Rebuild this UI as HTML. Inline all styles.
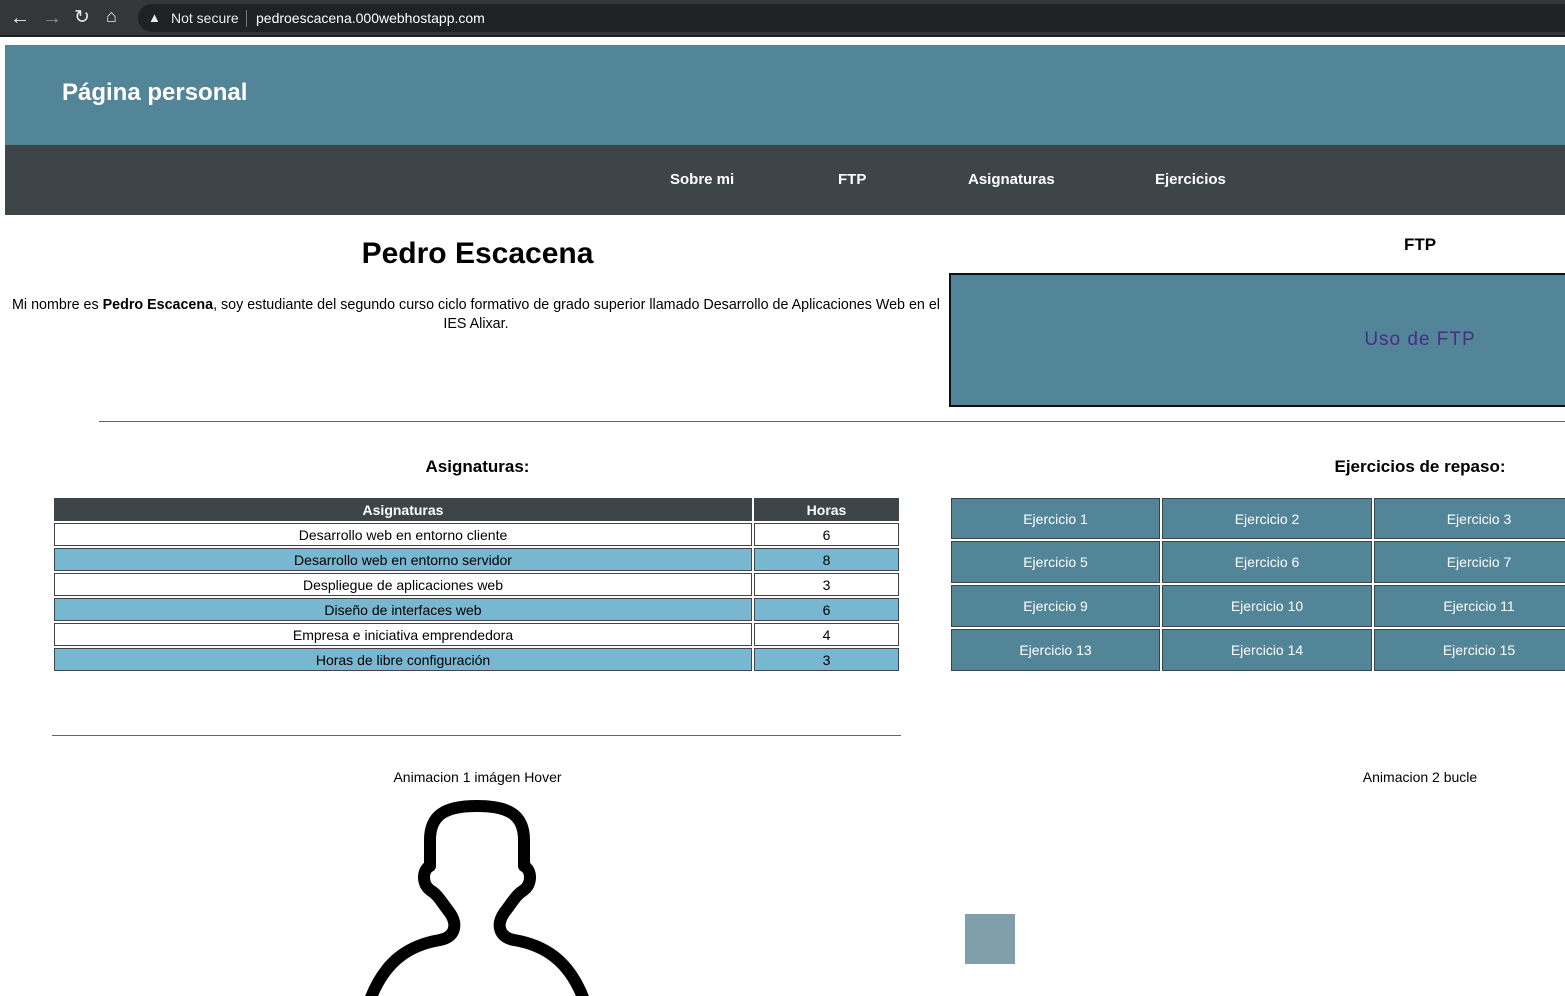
<!DOCTYPE html>
<html><head><meta charset="utf-8"><style>
*{margin:0;padding:0;box-sizing:border-box}
body{width:1565px;height:996px;overflow:hidden;background:#fff;font-family:"Liberation Sans",sans-serif;position:relative;color:#000}
.a{position:absolute}
.c{text-align:center}
.btn{position:absolute;background:#538598;border:1px solid #3a4448;color:#fff;font-size:14px;display:flex;align-items:center;justify-content:center}
.cell{position:absolute;border:1px solid #444;font-size:14px;display:flex;align-items:center;justify-content:center;height:23px}
.b{background:#78b7d0}
</style></head><body>
<div class="a" style="left:0;top:0;width:1565px;height:37px;background:#35363a"></div>
<div class="a" style="left:0;top:35px;width:1565px;height:2px;background:#202124"></div>
<div class="a" style="left:138px;top:4px;width:1427px;height:28px;border-radius:14px 0 0 14px;background:#202124"></div>
<div class="a" style="left:10px;top:7px;color:#e8eaed;font-size:20px">&#8592;</div>
<div class="a" style="left:42px;top:7px;color:#888;font-size:20px">&#8594;</div>
<div class="a" style="left:74px;top:6px;color:#e8eaed;font-size:19px">&#8635;</div>
<div class="a" style="left:106px;top:6px;color:#e8eaed;font-size:18px">&#8962;</div>
<div class="a" style="left:148px;top:10px;color:#e8eaed;font-size:13px">&#9650;</div>
<div class="a" style="left:171px;top:10px;color:#e8eaed;font-size:14px">Not secure</div>
<div class="a" style="left:246px;top:10px;width:1px;height:17px;background:#777"></div>
<div class="a" style="left:256px;top:10px;color:#fff;font-size:14px">pedroescacena.000webhostapp.com</div>

<div class="a" style="left:5px;top:45px;width:1560px;height:100px;background:#538598"></div>
<div class="a" style="left:62px;top:79px;color:#fff;font-size:24px;font-weight:bold">Página personal</div>
<div class="a" style="left:5px;top:145px;width:1560px;height:70px;background:#3d4549"></div>
<div class="a" style="left:670px;top:171px;color:#fff;font-size:15px;font-weight:bold">Sobre mi</div>
<div class="a" style="left:838px;top:171px;color:#fff;font-size:15px;font-weight:bold">FTP</div>
<div class="a" style="left:968px;top:171px;color:#fff;font-size:15px;font-weight:bold">Asignaturas</div>
<div class="a" style="left:1155px;top:171px;color:#fff;font-size:15px;font-weight:bold">Ejercicios</div>

<div class="a c" style="left:0;top:237px;width:955px;font-size:30px;font-weight:bold">Pedro Escacena</div>
<div class="a c" style="left:2px;top:296px;width:948px;font-size:14.3px;line-height:19px">Mi nombre es <b>Pedro Escacena</b>, soy estudiante del segundo curso ciclo formativo de grado superior llamado Desarrollo de Aplicaciones Web en el IES Alixar.</div>
<div class="a c" style="left:1275px;top:235px;width:290px;font-size:17px;font-weight:bold">FTP</div>
<div class="a" style="left:949px;top:273px;width:620px;height:134px;background:#538598;border:2px solid #111"></div>
<div class="a c" style="left:1275px;top:329px;width:290px;font-size:19px;color:#4b2b8a;letter-spacing:1px">Uso de FTP</div>
<div class="a" style="left:99px;top:421px;width:1466px;height:1px;background:#666"></div>

<div class="a c" style="left:0;top:457px;width:955px;font-size:17px;font-weight:bold">Asignaturas:</div>
<div class="a c" style="left:1275px;top:457px;width:290px;font-size:17px;font-weight:bold">Ejercicios de repaso:</div>

<div class="cell" style="left:54px;top:498px;width:698px;background:#3d4549;color:#fff;font-weight:bold;border-color:#3d4549">Asignaturas</div>
<div class="cell" style="left:754px;top:498px;width:145px;background:#3d4549;color:#fff;font-weight:bold;border-color:#3d4549">Horas</div>
<div class="cell" style="left:54px;top:523px;width:698px">Desarrollo web en entorno cliente</div><div class="cell" style="left:754px;top:523px;width:145px">6</div>
<div class="cell b" style="left:54px;top:548px;width:698px">Desarrollo web en entorno servidor</div><div class="cell b" style="left:754px;top:548px;width:145px">8</div>
<div class="cell" style="left:54px;top:573px;width:698px">Despliegue de aplicaciones web</div><div class="cell" style="left:754px;top:573px;width:145px">3</div>
<div class="cell b" style="left:54px;top:598px;width:698px">Diseño de interfaces web</div><div class="cell b" style="left:754px;top:598px;width:145px">6</div>
<div class="cell" style="left:54px;top:623px;width:698px">Empresa e iniciativa emprendedora</div><div class="cell" style="left:754px;top:623px;width:145px">4</div>
<div class="cell b" style="left:54px;top:648px;width:698px">Horas de libre configuración</div><div class="cell b" style="left:754px;top:648px;width:145px">3</div>

<div class="btn" style="left:951px;top:498px;width:209px;height:41px">Ejercicio 1</div>
<div class="btn" style="left:1162px;top:498px;width:210px;height:41px">Ejercicio 2</div>
<div class="btn" style="left:1374px;top:498px;width:210px;height:41px">Ejercicio 3</div>
<div class="btn" style="left:951px;top:541px;width:209px;height:42px">Ejercicio 5</div>
<div class="btn" style="left:1162px;top:541px;width:210px;height:42px">Ejercicio 6</div>
<div class="btn" style="left:1374px;top:541px;width:210px;height:42px">Ejercicio 7</div>
<div class="btn" style="left:951px;top:585px;width:209px;height:42px">Ejercicio 9</div>
<div class="btn" style="left:1162px;top:585px;width:210px;height:42px">Ejercicio 10</div>
<div class="btn" style="left:1374px;top:585px;width:210px;height:42px">Ejercicio 11</div>
<div class="btn" style="left:951px;top:629px;width:209px;height:42px">Ejercicio 13</div>
<div class="btn" style="left:1162px;top:629px;width:210px;height:42px">Ejercicio 14</div>
<div class="btn" style="left:1374px;top:629px;width:210px;height:42px">Ejercicio 15</div>

<div class="a" style="left:52px;top:735px;width:849px;height:1px;background:#666"></div>
<div class="a c" style="left:0;top:769px;width:955px;font-size:14px">Animacion 1 imágen Hover</div>
<div class="a c" style="left:1275px;top:769px;width:290px;font-size:14px">Animacion 2 bucle</div>
<svg class="a" style="left:360px;top:800px" width="235" height="196" viewBox="0 0 235 196">
<path d="M10 200 C25 160 50 145 80 140 C95 137 98 125 90 113 C80 100 78 95 70 90 C62 84 62 70 70 66 L70 40 C70 15 85 6 117 6 C149 6 164 15 164 40 L164 66 C172 70 172 84 164 90 C156 95 154 100 144 113 C136 125 139 137 154 140 C184 145 209 160 224 200" fill="none" stroke="#000" stroke-width="12" stroke-linejoin="round"/>
</svg>
<div class="a" style="left:965px;top:914px;width:50px;height:50px;background:#7fa0ab"></div>
</body></html>
